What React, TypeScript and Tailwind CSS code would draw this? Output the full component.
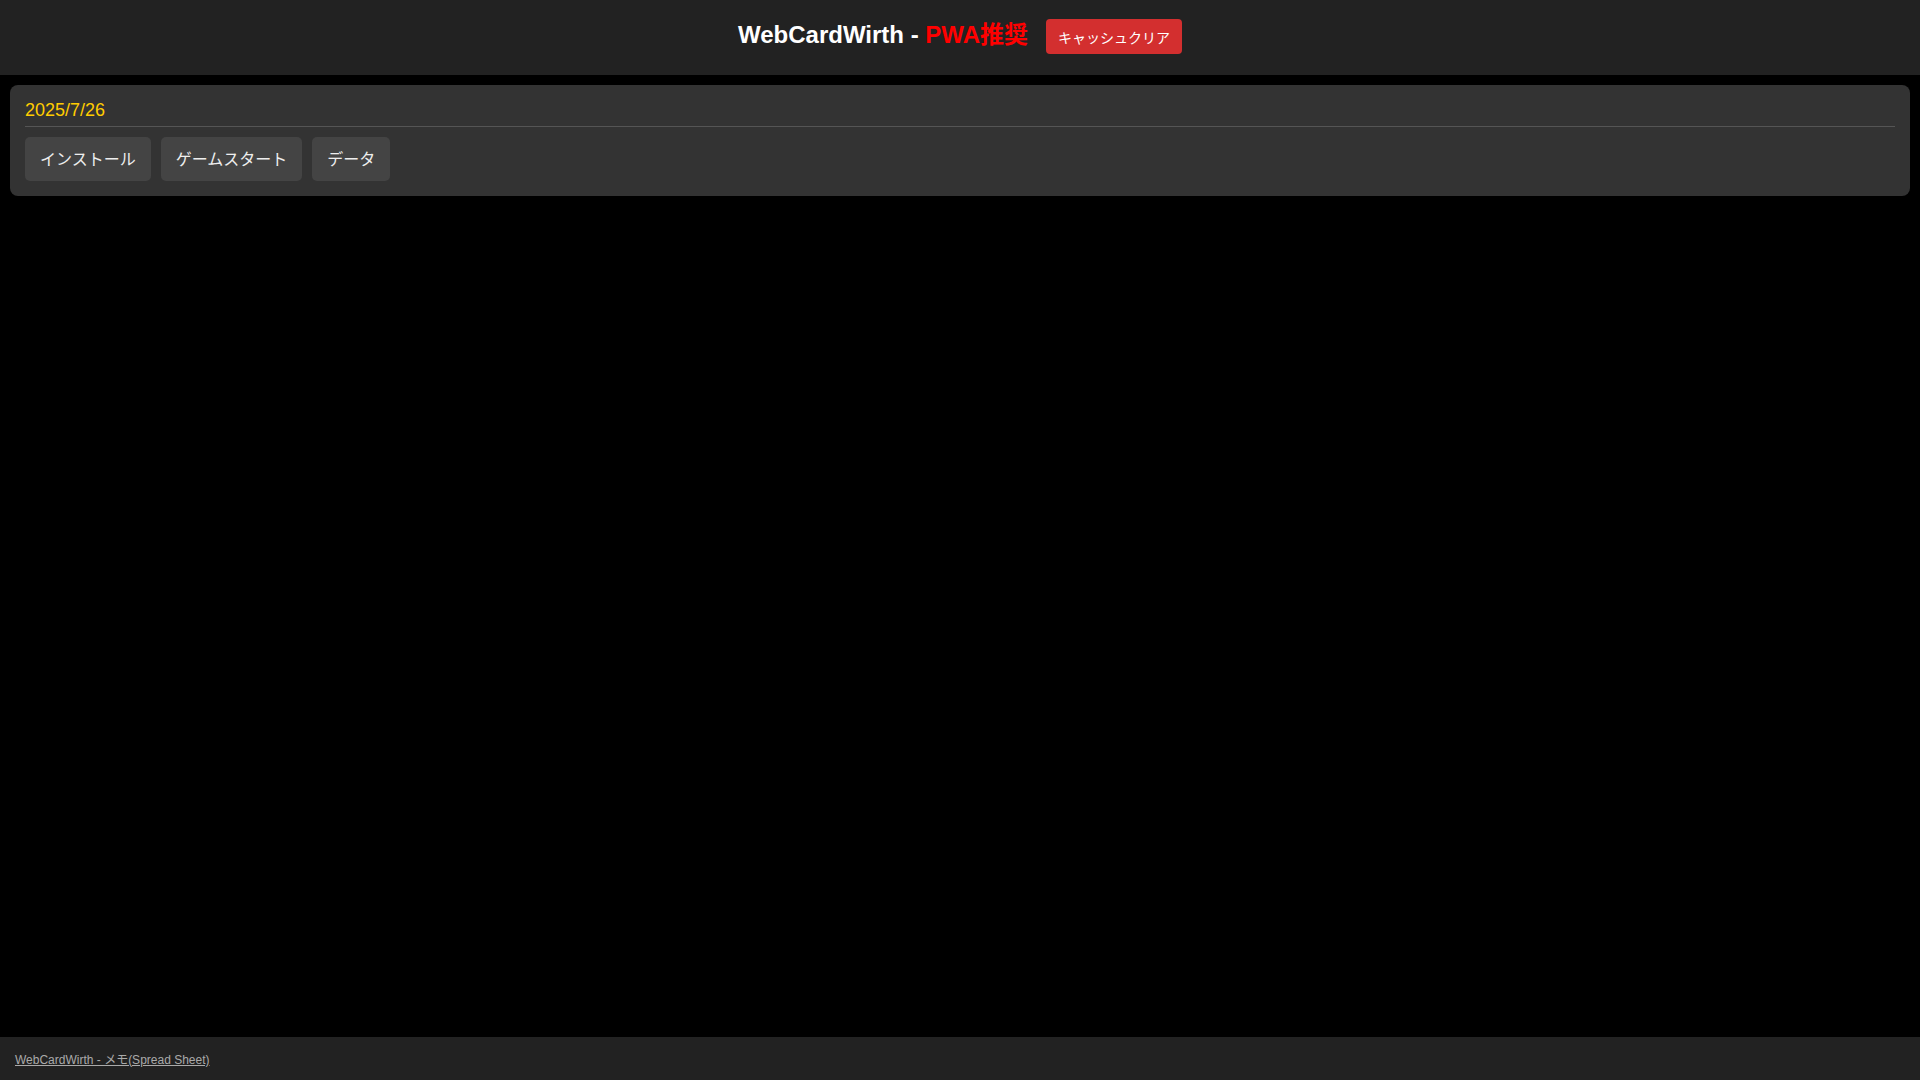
import React from "react";

const font = { fontFamily: '"Liberation Sans", Arial, "Noto Sans CJK JP", sans-serif' };

export default function App() {
  return (
    <div
      className="min-h-screen flex flex-col bg-black text-white font-['Liberation_Sans','Noto_Sans_CJK_JP',sans-serif]"
      style={font}
    >
      <header className="h-[75px] bg-[#222222] flex items-center justify-center gap-[18px] pb-[2px] shrink-0">
        <h1 className="text-[24px] font-bold leading-[28px] mb-[3px] text-white whitespace-nowrap">
          WebCardWirth - <span className="text-[#ff0000]">PWA推奨</span>
        </h1>
        <button className="h-[35px] px-[12px] pt-[2px] bg-[#d32f2f] text-white text-[14px] leading-[20px] rounded-[4px] whitespace-nowrap">
          キャッシュクリア
        </button>
      </header>

      <main className="flex-1 px-[10px] pt-[10px]">
        <section className="bg-[#333333] rounded-[8px] p-[15px]">
          <div className="text-[18px] leading-[21px] text-[#ffcc00] pb-[5px] border-b border-[#555555]">
            2025/7/26
          </div>
          <div className="flex gap-[10px] mt-[10px]">
            <button className="h-[44px] px-[15px] pt-[2px] bg-[#444444] text-[#eeeeee] text-[16px] leading-[24px] rounded-[5px] whitespace-nowrap">
              インストール
            </button>
            <button className="h-[44px] px-[15px] pt-[2px] bg-[#444444] text-[#eeeeee] text-[16px] leading-[24px] rounded-[5px] whitespace-nowrap">
              ゲームスタート
            </button>
            <button className="h-[44px] px-[15px] pt-[2px] bg-[#444444] text-[#eeeeee] text-[16px] leading-[24px] rounded-[5px] whitespace-nowrap">
              データ
            </button>
          </div>
        </section>
      </main>

      <footer className="h-[43px] bg-[#222222] flex items-center px-[15px] pt-[2px] shrink-0">
        <a href="#" className="text-[12px] leading-[14px] text-[#aaaaaa] underline">
          WebCardWirth - メモ(Spread Sheet)
        </a>
      </footer>
    </div>
  );
}
